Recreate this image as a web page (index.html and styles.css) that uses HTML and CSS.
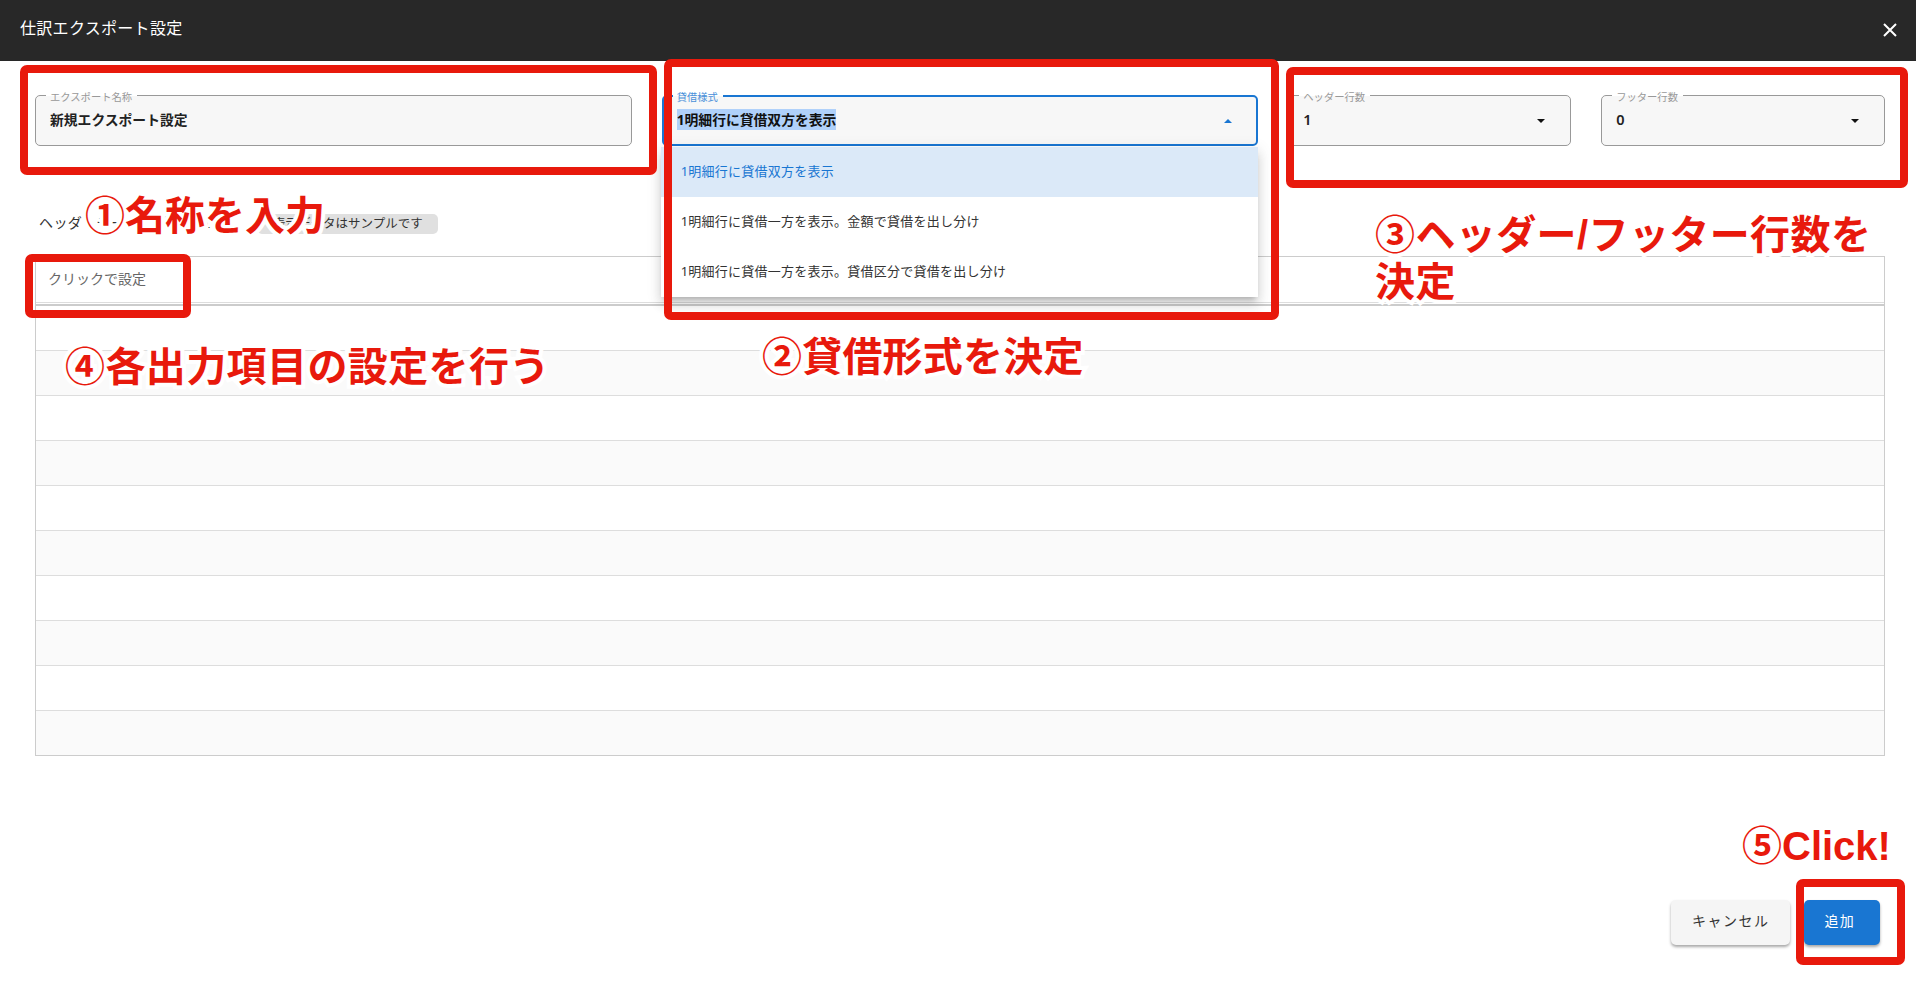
FILE: index.html
```
<!doctype html>
<html lang="ja">
<head>
<title>仕訳エクスポート設定</title>
<meta charset="utf-8">
<link rel="stylesheet" href="styles.css">
</head>
<body>

<div class="header">
	<h1>仕訳エクスポート設定</h1>
	<a class="close" href="javascript:;">
		<svg width="14" height="14" viewBox="0 0 14 14"><path d="M1 1L13 13M13 1L1 13" stroke="#fff" stroke-width="2" fill="none"/></svg>
	</a>
</div>

<div class="fields">
	<div class="field name">
		<label>エクスポート名称</label>
		<span class="value">新規エクスポート設定</span>
	</div>
	<div class="field style active">
		<label>貸借様式</label>
		<span class="value"><mark>1明細行に貸借双方を表示</mark></span>
		<i class="arrow"></i>
		<ul class="menu">
			<li class="on">1明細行に貸借双方を表示</li>
			<li>1明細行に貸借一方を表示。金額で貸借を出し分け</li>
			<li>1明細行に貸借一方を表示。貸借区分で貸借を出し分け</li>
		</ul>
	</div>
	<div class="field rows">
		<label>ヘッダー行数</label>
		<span class="value num">1</span>
		<i class="arrow"></i>
	</div>
	<div class="field rows">
		<label>フッター行数</label>
		<span class="value num">0</span>
		<i class="arrow"></i>
	</div>
</div>

<div class="caption">
	<span class="caption_text">ヘッダ・データのプレビュー</span>
	<span class="chip">表示データはサンプルです</span>
</div>

<div class="table">
	<div class="thead">クリックで設定</div>
	<div class="tr"></div>
	<div class="tr"></div>
	<div class="tr"></div>
	<div class="tr"></div>
	<div class="tr"></div>
	<div class="tr"></div>
	<div class="tr"></div>
	<div class="tr"></div>
	<div class="tr"></div>
	<div class="tr"></div>
</div>

<div class="buttons">
	<a class="btn" href="javascript:;">キャンセル</a>
	<a class="btn primary" href="javascript:;">追加</a>
</div>

<!-- 説明用の枠と番号 -->
<div class="frame frame1"></div>
<div class="frame frame2"></div>
<div class="frame frame3"></div>
<div class="frame frame4"></div>
<div class="frame frame5"></div>
<div class="note note1">①名称を入力</div>
<div class="note note2">②貸借形式を決定</div>
<div class="note note3">③ヘッダー/フッター行数を<br>決定</div>
<div class="note note4">④各出力項目の設定を行う</div>
<div class="note note5">⑤Click!</div>

</body>
</html>
```
FILE: styles.css
```
*{box-sizing:border-box;}
html,body{
	height:100%;
}
body{
	margin:0;
	background:#fff;
	color:#333;
	font:14px "Noto Sans","Noto Sans CJK JP",sans-serif;
	position:relative;
	overflow:hidden;
}
ul{padding:0;margin:0;}
li{margin:0;padding:0;list-style-type:none;}
a{text-decoration:none;}

.header{height:61px;padding:0 19px 0 20px;background:#282828;color:#fff;display:flex;align-items:center;justify-content:space-between;}
.header h1{margin:0 0 7px;font-size:16px;font-weight:400;letter-spacing:.3px;}
.close{height:14px;margin-bottom:2px;line-height:0;}

/* 入力欄 */
.fields{display:flex;gap:30px;padding:34px 31px 0 35px;}
.field{height:51px;position:relative;border:1px solid #999;border-radius:5px;background:#f7f7f7;padding:13px 14px 0;}
.field.name{width:597px;}
.field.style{width:597px;}
.field.rows{width:283px;}
.field.rows:last-child{width:284px;}
.field label{position:absolute;left:10px;top:-9px;padding:0 5px 0 4px;background:linear-gradient(#fff 9px,#f7f7f7 9px);color:#999;font-size:10.3px;line-height:20px;white-space:nowrap;}
.value{display:block;line-height:21px;font-weight:700;font-size:13.8px;color:#222;white-space:nowrap;}
.num{font-weight:600;font-size:14.5px;}
.value mark{display:inline-block;height:21px;background:#b0d1fa;color:#111;}
.arrow{position:absolute;right:25px;top:23px;border:4px solid transparent;border-top:4px solid #111;border-bottom:0;}
.field.active{border:2px solid #1976d2;padding:12px 13px 0;}
.field.active label{left:9px;top:-10px;color:#4a90d9;}
.field.active .arrow{right:24px;top:22px;border-top:0;border-bottom:4px solid #1976d2;}
.menu{position:absolute;left:-3px;top:50px;width:597px;z-index:10;background:#fff;box-shadow:0 5px 5px -3px rgba(0,0,0,.2),0 8px 10px 1px rgba(0,0,0,.1),0 3px 14px 2px rgba(0,0,0,.08);}
.menu li{height:50px;line-height:48px;padding-left:20px;font-size:13px;letter-spacing:.25px;}
.menu .on{background:#dbe9f8;color:#1976d2;}

.caption{display:flex;align-items:center;height:20px;margin:68px 0 0 39px;}
.caption_text{width:218px;height:20px;line-height:18px;letter-spacing:.4px;}
.chip{width:181px;height:20px;line-height:19px;padding-left:16px;border-radius:5px;background:#e0e0e0;font-size:12.5px;white-space:nowrap;}

/* プレビュー表 */
.table{margin:22px 31px 0 35px;border:1px solid #ccc;}
.thead{height:49px;padding:12px 12px 0;line-height:20px;color:#666;background:linear-gradient(#ddd,#ddd) 0 45px/100% 1px no-repeat;border-bottom:2px solid #ccc;}
.tr{height:45px;border-bottom:1px solid #ddd;}
.tr:nth-child(odd){background:#fafafa;}
.tr:last-child{height:44px;border-bottom:0;}

.buttons{display:flex;justify-content:flex-end;gap:14px;margin:144px 36px 0 0;}
.btn{height:45px;line-height:42px;padding:0 20px 0 21px;border-radius:5px;background:#f5f5f5;color:#333;font-size:14px;letter-spacing:1.5px;box-shadow:0 2px 3px rgba(0,0,0,.35);}
.primary{background:#1976d2;color:#fff;padding:0 25px 0 21px;letter-spacing:1.2px;}

.frame{position:absolute;z-index:20;border:8px solid #e8190c;border-radius:7px;}
.frame1{left:20px;top:65px;width:637px;height:110px;}
.frame2{left:664px;top:59px;width:615px;height:261px;}
.frame3{left:1286px;top:67px;width:622px;height:121px;}
.frame4{left:25px;top:254px;width:166px;height:64px;}
.frame5{left:1796px;top:879px;width:109px;height:86px;}

.note{position:absolute;z-index:21;color:#e8190c;font:bold 40px/47px "Liberation Sans","Noto Sans CJK JP",sans-serif;white-space:nowrap;-webkit-text-stroke:8px #fff;paint-order:stroke fill;}
.note1{left:85px;top:193px;}
.note2{left:762px;top:334px;letter-spacing:.2px;}
.note3{left:1375px;top:212px;letter-spacing:.4px;}
.note4{left:65px;top:344px;letter-spacing:.4px;}
.note5{left:1742px;top:823px;}
```
